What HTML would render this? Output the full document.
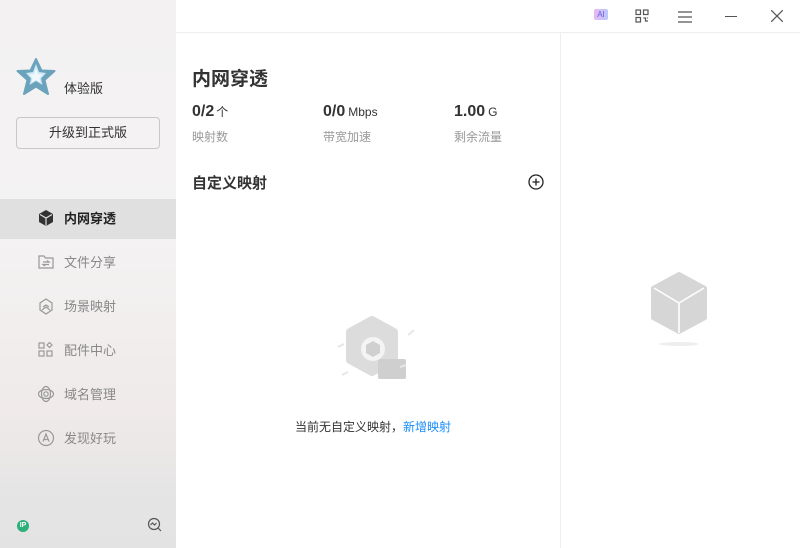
<!DOCTYPE html>
<html><head><meta charset="utf-8"><style>
*{margin:0;padding:0;box-sizing:border-box}
body{width:800px;height:548px;overflow:hidden;background:#fff;font-family:"Liberation Sans","Noto Sans CJK SC",sans-serif;position:relative;color:#333}
.side{position:absolute;left:0;top:0;width:176px;height:548px;background:linear-gradient(#f3f1f1 0%,#f4f3f3 40%,#f0eaea 75%,#e4e4e4 92%,#e3e3e3 100%)}
.ab{position:absolute}
.nav{position:absolute;left:0;width:176px;height:40px;font-size:13px;color:#888}
.nav svg{position:absolute;left:37px;top:10px}
.nav span{position:absolute;left:64px;top:11px;line-height:18px}
.t{position:absolute;white-space:nowrap}
</style></head><body>
<div class="side">
 <svg class="ab" style="left:16px;top:58px" width="40" height="38" viewBox="0 0 40 38"><path d="M20 1 L25.5 12.5 L38.5 13 L28.5 22 L32 36 L20 28.5 L8 36 L11.5 22 L1.5 13 L14.5 12.5Z" fill="#6ba3bd" stroke="#6ba3bd" stroke-width="2" stroke-linejoin="round"/><path d="M20 6 L23 14 L30 15 L25 20.5 L26.5 27 L20 23 L13.5 27 L15 20.5 L10 15 L17 14Z" fill="#cfe8f5"/><path d="M20 10 L22 16 L27 16.5 L23.5 20 L24.5 24.5 L20 22 L15.5 24.5 L16.5 20 L13 16.5 L18 16Z" fill="#eef8fd"/></svg>
 <div class="t" style="left:64px;top:78px;font-size:13px;color:#333">体验版</div>
 <div class="ab" style="left:16px;top:117px;width:144px;height:32px;border:1px solid #c8c8c8;border-radius:4px;font-size:13px;color:#333;text-align:center;line-height:30px">升级到正式版</div>
 <div class="nav" style="top:199px;background:#e0e0e0;color:#222;font-weight:bold"><svg width="18" height="18" viewBox="0 0 18 18"><path d="M9 1 L16 5 L16 13 L9 17 L2 13 L2 5Z" fill="#333"/><path d="M3 5.5 L9 9 L15 5.5 M9 9 L9 16.5" stroke="#e0e0e0" stroke-width="1.2" fill="none"/></svg><span>内网穿透</span></div>
 <div class="nav" style="top:243px"><svg width="18" height="18" viewBox="0 0 18 18" fill="none" stroke="#999" stroke-width="1.2"><path d="M2 3h5l1.5 2H16v10H2Z"/><path d="M6 9h6l-2-1.5M12 11.5H6l2 1.5"/></svg><span>文件分享</span></div>
 <div class="nav" style="top:287px"><svg width="18" height="18" viewBox="0 0 18 18" fill="none" stroke="#999" stroke-width="1.2"><path d="M9 2l6 4v7l-6 4-6-4V6Z"/><path d="M5 13l4-3 4 3M6 10l3-2 3 2"/></svg><span>场景映射</span></div>
 <div class="nav" style="top:331px"><svg width="18" height="18" viewBox="0 0 18 18" fill="none" stroke="#999" stroke-width="1.2"><rect x="2" y="2" width="5" height="5"/><rect x="2" y="10" width="5" height="5"/><rect x="10" y="10" width="5" height="5"/><path d="M12.5 1.5l2.5 2.5-2.5 2.5-2.5-2.5Z"/></svg><span>配件中心</span></div>
 <div class="nav" style="top:375px"><svg width="18" height="18" viewBox="0 0 18 18" fill="none" stroke="#999" stroke-width="1.2"><ellipse cx="9" cy="9" rx="7.5" ry="4.5"/><ellipse cx="9" cy="9" rx="4.5" ry="7.5"/><circle cx="9" cy="9" r="2.2"/></svg><span>域名管理</span></div>
 <div class="nav" style="top:419px"><svg width="18" height="18" viewBox="0 0 18 18" fill="none" stroke="#999" stroke-width="1.2"><circle cx="9" cy="9" r="7.5"/><path d="M6 12.5L9 5l3 7.5M7 10.5h4"/></svg><span>发现好玩</span></div>
 <div class="ab" style="left:17px;top:520px;width:12px;height:12px;border-radius:50%;background:#2bb07a;color:#fff;font-size:7px;font-weight:bold;text-align:center;line-height:12px">IP</div>
 <svg class="ab" style="left:147px;top:517px" width="16" height="16" viewBox="0 0 16 16" fill="none" stroke="#555" stroke-width="1.2"><circle cx="7" cy="7" r="5.5"/><path d="M3.5 8l2-2 2 2 2-2M11 11l3 3"/></svg>
</div>
<div class="ab" style="left:176px;top:32px;width:624px;height:1px;background:#eee"></div>
<div class="ab" style="left:560px;top:33px;width:1px;height:515px;background:#eee"></div>
<div class="ab" style="left:594px;top:9px;width:14px;height:11px;border-radius:2px;background:linear-gradient(90deg,#e9b8f5,#b8c8fb);color:#6a5bd6;font-size:8px;text-align:center;line-height:11px">AI</div>
<svg class="ab" style="left:635px;top:9px" width="14" height="14" viewBox="0 0 14 14" fill="none" stroke="#555" stroke-width="1.2"><rect x="1" y="1" width="4.5" height="4.5"/><rect x="8.5" y="1" width="4.5" height="4.5"/><rect x="1" y="8.5" width="4.5" height="4.5"/><path d="M8.5 9h2v3h2.5M12.5 8.5v1"/></svg>
<svg class="ab" style="left:678px;top:11px" width="14" height="12" fill="none" stroke="#555" stroke-width="1.2"><path d="M0 1h14M0 6h14M0 11h14"/></svg>
<div class="ab" style="left:725px;top:16px;width:12px;height:1px;background:#555"></div>
<svg class="ab" style="left:771px;top:10px" width="12" height="12" stroke="#555" stroke-width="1.2"><path d="M0 0L12 12M12 0L0 12"/></svg>
<div class="t" style="left:192px;top:64px;font-size:19px;font-weight:bold;color:#333">内网穿透</div>
<div class="t" style="left:192px;top:103px;font-size:16px;font-weight:bold;color:#333">0/2<span style="font-size:12px;font-weight:normal;margin-left:2px">个</span></div>
<div class="t" style="left:323px;top:103px;font-size:16px;font-weight:bold;color:#333">0/0<span style="font-size:12px;font-weight:normal;margin-left:3px">Mbps</span></div>
<div class="t" style="left:454px;top:103px;font-size:16px;font-weight:bold;color:#333">1.00<span style="font-size:12px;font-weight:normal;margin-left:3px">G</span></div>
<div class="t" style="left:192px;top:128px;font-size:12px;color:#999">映射数</div>
<div class="t" style="left:323px;top:128px;font-size:12px;color:#999">带宽加速</div>
<div class="t" style="left:454px;top:128px;font-size:12px;color:#999">剩余流量</div>
<div class="t" style="left:192px;top:172px;font-size:15px;font-weight:bold;color:#333">自定义映射</div>
<svg class="ab" style="left:528px;top:174px" width="16" height="16" fill="none" stroke="#222" stroke-width="1.3"><circle cx="8" cy="8" r="7"/><path d="M8 4.5v7M4.5 8h7"/></svg>
<svg class="ab" style="left:330px;top:315px" width="90" height="70" viewBox="0 0 90 70"><path d="M42 5 L64 17 L64 45 L42 57 L20 45 L20 17Z" fill="#dcdcdc" stroke="#dcdcdc" stroke-width="8" stroke-linejoin="round"/><circle cx="43" cy="34" r="12" fill="#f4f4f4"/><path d="M43 26 L50 30 L50 38 L43 42 L36 38 L36 30Z" fill="#d0d0d0"/><rect x="48" y="44" width="28" height="20" rx="2" fill="#cfcfcf"/><path d="M8 32l6-3M78 20l6-5M70 52l6-2M12 60l6-3" stroke="#e6e6e6" stroke-width="2"/></svg>
<div class="t" style="left:295px;top:418px;font-size:12px;color:#333">当前无自定义映射，<span style="color:#1a8cff">新增映射</span></div>
<svg class="ab" style="left:650px;top:272px" width="58" height="75" viewBox="0 0 58 75"><path d="M29 2 L55 16 L55 46 L29 60 L3 46 L3 16Z" fill="#d6d6d6" stroke="#d6d6d6" stroke-width="4" stroke-linejoin="round"/><path d="M4 16 L29 31 L54 16 M29 31 L29 61" stroke="#fff" stroke-width="1.6" fill="none"/><ellipse cx="29" cy="72" rx="20" ry="2" fill="#eee"/></svg>
</body></html>
